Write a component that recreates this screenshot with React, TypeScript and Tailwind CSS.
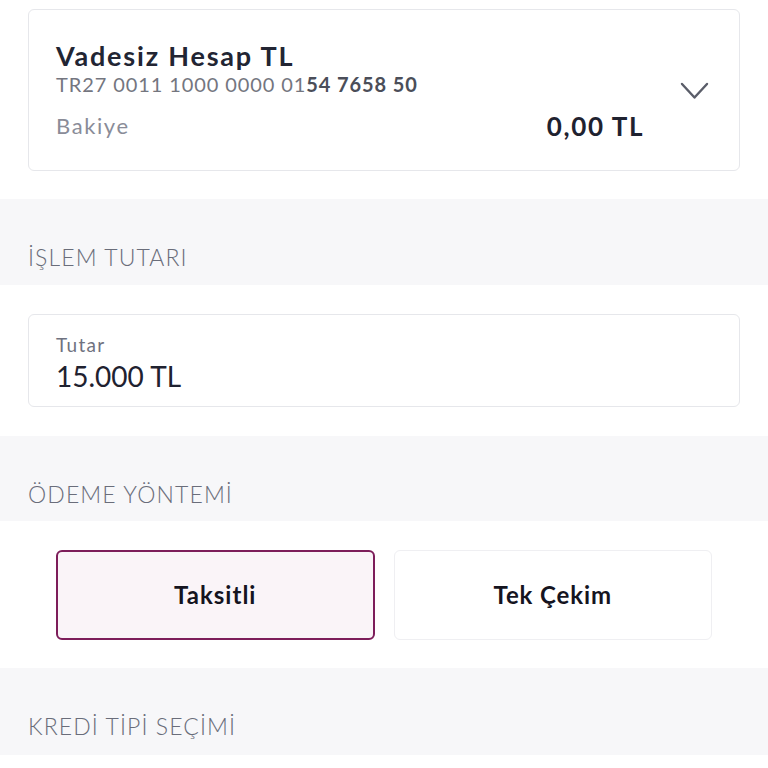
import React from 'react';

const SectionHeader: React.FC<{ title: string; className?: string }> = ({ title, className }) => (
  <div className={`bg-[#f7f7f9] px-[28px] pt-[44px] ${className ?? 'pb-[14px]'}`}>
    <h2 className="text-[23px] leading-[28px] font-light text-[#6a6d7a] tracking-[1.1px]">{title}</h2>
  </div>
);

const App: React.FC = () => {
  return (
    <div className="min-h-[768px] bg-white" style={{ fontFamily: 'Lato, "Noto Sans", sans-serif' }}>
      {/* hesap kartı */}
      <section className="px-[28px] pt-[9px] pb-[28px]">
        <div className="flex items-center rounded-[6px] border border-[#e6e7eb] bg-white pl-[27px] pt-[30px] pb-[29px]">
          <div className="flex-1">
            <div className="text-[27px] leading-[32px] font-bold text-[#222533] tracking-[1.8px]">Vadesiz Hesap TL</div>
            <div className="text-[20px] leading-[24px] text-[#74767f] tracking-[0.9px]">
              TR27 0011 1000 0000 01<span className="font-bold text-[#4b4e59]">54 7658 50</span>
            </div>
            <div className="mt-[15px] flex items-center justify-between">
              <span className="text-[22px] leading-[30px] text-[#8a8c98] tracking-[1.6px]">Bakiye</span>
              <span className="mr-[-2px] text-[26px] leading-[30px] font-bold text-[#1f2230] tracking-[1.6px]">0,00 TL</span>
            </div>
          </div>
          <div className="ml-[38px] mr-[30px] w-[29px]">
            <svg width="29" height="18" viewBox="0 0 29 18" fill="none" stroke="#5a5d69" strokeWidth="2.4" strokeLinecap="round" strokeLinejoin="round">
              <path d="M2 2l12.5 13.5L27 2" />
            </svg>
          </div>
        </div>
      </section>

      <SectionHeader title="İŞLEM TUTARI" />

      {/* tutar */}
      <section className="px-[28px] py-[29px]">
        <div className="rounded-[6px] border border-[#e6e7eb] bg-white px-[27px] pt-[19px] pb-[14px]">
          <div className="text-[19px] leading-[22px] text-[#6f7280] tracking-[1.3px]">Tutar</div>
          <div className="mt-[4px] text-[28px] leading-[32px] text-[#1f2230]">15.000 TL</div>
        </div>
      </section>

      <SectionHeader title="ÖDEME YÖNTEMİ" className="pb-[13px]" />

      {/* ödeme yöntemi */}
      <section className="grid grid-cols-2 gap-[19px] px-[56px] pt-[29px] pb-[28px]">
        <button className="h-[90px] rounded-[6px] border-2 border-[#7d1d5a] bg-[#faf4f8] text-[24px] font-bold text-[#15141f] tracking-[1px]">
          Taksitli
        </button>
        <button className="h-[90px] rounded-[6px] border border-[#efeff2] bg-white text-[24px] font-bold text-[#15141f] tracking-[0.9px]">
          Tek Çekim
        </button>
      </section>

      <SectionHeader title="KREDİ TİPİ SEÇİMİ" className="pb-[15px]" />
    </div>
  );
};

export default App;
